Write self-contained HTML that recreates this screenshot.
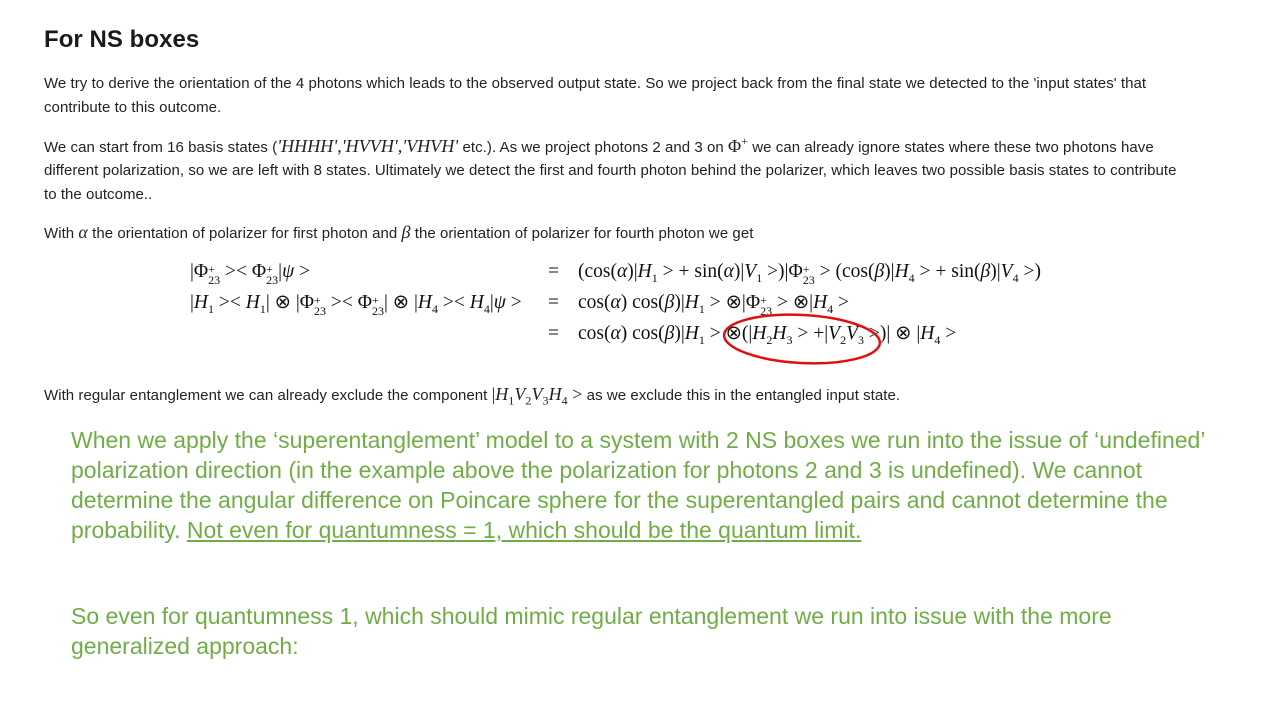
<!DOCTYPE html>
<html><head><meta charset="utf-8"><style>
body{margin:0;width:1280px;height:720px;background:#fff;position:relative;overflow:hidden;font-family:"Liberation Sans",sans-serif;color:#222}
.t{position:absolute;white-space:nowrap;font-size:15px;letter-spacing:0.05px;line-height:24px}
.m{font-family:"Liberation Serif",serif;font-size:18px;line-height:0}
.e{position:absolute;white-space:nowrap;font-family:"Liberation Serif",serif;font-size:19.5px;line-height:22px;color:#111}
i{font-style:italic}
sub,sup{font-size:12px;line-height:0}
.ss{display:inline-block;vertical-align:-7px;font-size:12px;line-height:11px;text-align:left}
.ss span{display:block}
.g{position:absolute;white-space:nowrap;font-size:23px;line-height:30px;color:#70ad47}
</style></head><body>
<div class="t" style="left:44px;top:24px;font-size:24px;line-height:32px;font-weight:bold;color:#1a1a1a">For NS boxes</div>
<div class="t" style="left:44px;top:72px">We try to derive the orientation of the 4 photons which leads to the observed output state. So we project back from the final state we detected to the 'input states' that</div>
<div class="t" style="left:44px;top:96px">contribute to this outcome.</div>
<div class="t" style="left:44px;top:136px">We can start from 16 basis states (<span class="m"><i>'HHHH','HVVH','VHVH'</i></span> etc.). As we project photons 2 and 3 on <span class="m">Φ<sup>+</sup></span> we can already ignore states where these two photons have</div>
<div class="t" style="left:44px;top:159px">different polarization, so we are left with 8 states. Ultimately we detect the first and fourth photon behind the polarizer, which leaves two possible basis states to contribute</div>
<div class="t" style="left:44px;top:183px">to the outcome..</div>
<div class="t" style="left:44px;top:222px">With <span class="m"><i>α</i></span> the orientation of polarizer for first photon and <span class="m"><i>β</i></span> the orientation of polarizer for fourth photon we get</div>
<div class="e" style="left:190px;top:261px">|Φ<span class="ss"><span>+</span><span>23</span></span> &gt;&lt; Φ<span class="ss"><span>+</span><span>23</span></span>|<i>ψ</i> &gt;</div>
<div class="e" style="left:190px;top:292px">|<i>H</i><sub>1</sub> &gt;&lt; <i>H</i><sub>1</sub>| ⊗ |Φ<span class="ss"><span>+</span><span>23</span></span> &gt;&lt; Φ<span class="ss"><span>+</span><span>23</span></span>| ⊗ |<i>H</i><sub>4</sub> &gt;&lt; <i>H</i><sub>4</sub>|<i>ψ</i> &gt;</div>
<div class="e" style="left:548px;top:261px">=</div><div class="e" style="left:548px;top:292px">=</div><div class="e" style="left:548px;top:323px">=</div>
<div class="e" style="left:578px;top:261px">(cos(<i>α</i>)|<i>H</i><sub>1</sub> &gt; + sin(<i>α</i>)|<i>V</i><sub>1</sub> &gt;)|Φ<span class="ss"><span>+</span><span>23</span></span> &gt; (cos(<i>β</i>)|<i>H</i><sub>4</sub> &gt; + sin(<i>β</i>)|<i>V</i><sub>4</sub> &gt;)</div>
<div class="e" style="left:578px;top:292px">cos(<i>α</i>) cos(<i>β</i>)|<i>H</i><sub>1</sub> &gt; ⊗|Φ<span class="ss"><span>+</span><span>23</span></span> &gt; ⊗|<i>H</i><sub>4</sub> &gt;</div>
<div class="e" style="left:578px;top:323px">cos(<i>α</i>) cos(<i>β</i>)|<i>H</i><sub>1</sub> &gt; ⊗(|<i>H</i><sub>2</sub><i>H</i><sub>3</sub> &gt; +|<i>V</i><sub>2</sub><i>V</i><sub>3</sub> &gt;)| ⊗ |<i>H</i><sub>4</sub> &gt;</div>
<svg style="position:absolute;left:720px;top:308px" width="170" height="60"><ellipse cx="82" cy="31" rx="78" ry="24" fill="none" stroke="#e01010" stroke-width="2.5" transform="rotate(3 82 31)"/></svg>
<div class="t" style="left:44px;top:384px">With regular entanglement we can already exclude the component <span class="m">|<i>H</i><sub>1</sub><i>V</i><sub>2</sub><i>V</i><sub>3</sub><i>H</i><sub>4</sub> &gt;</span> as we exclude this in the entangled input state.</div>
<div class="g" style="left:71px;top:425px">When we apply the ‘superentanglement’ model to a system with 2 NS boxes we run into the issue of ‘undefined’</div>
<div class="g" style="left:71px;top:455px">polarization direction (in the example above the polarization for photons 2 and 3 is undefined). We cannot</div>
<div class="g" style="left:71px;top:485px">determine the angular difference on Poincare sphere for the superentangled pairs and cannot determine the</div>
<div class="g" style="left:71px;top:515px">probability. <u>Not even for quantumness = 1, which should be the quantum limit.</u></div>
<div class="g" style="left:71px;top:601px">So even for quantumness 1, which should mimic regular entanglement we run into issue with the more</div>
<div class="g" style="left:71px;top:631px">generalized approach:</div>
</body></html>
